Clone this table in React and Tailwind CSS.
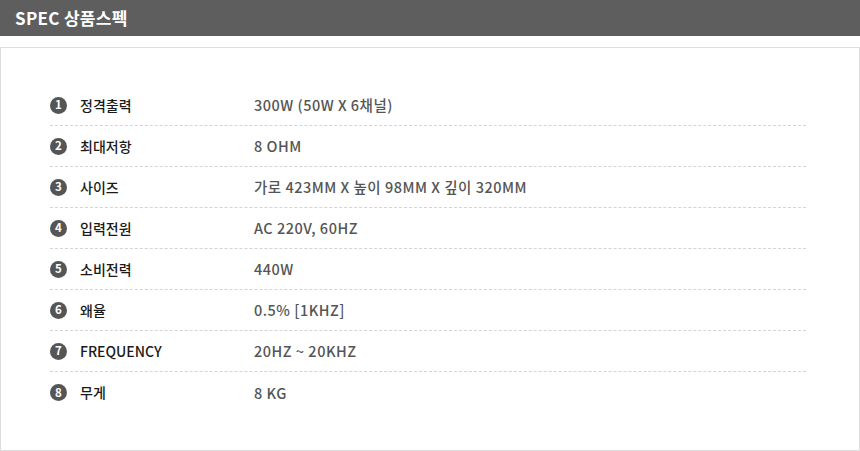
const specs = [
  ["정격출력", "300W (50W X 6채널)"],
  ["최대저항", "8 OHM"],
  ["사이즈", "가로 423MM X 높이 98MM X 깊이 320MM"],
  ["입력전원", "AC 220V, 60HZ"],
  ["소비전력", "440W"],
  ["왜율", "0.5% [1KHZ]"],
  ["FREQUENCY", "20HZ ~ 20KHZ"],
  ["무게", "8 KG"],
];

export default function App() {
  return (
    <div
      className="w-[860px] h-[451px] bg-white overflow-hidden"
      style={{ fontFamily: '"Noto Sans CJK KR", "Noto Sans", sans-serif' }}
    >
      <div className="h-[36px] bg-[#5e5e5e] flex items-center pl-[15px]">
        <span className="text-white text-[17px] font-bold tracking-[0.3px]">SPEC 상품스펙</span>
      </div>
      <div className="mt-[11px] h-[404px] border border-[#dddddd] pt-[37px] pl-[49px] pr-[53px]">
        {specs.map(([label, value], i) => (
          <div
            key={i}
            className={
              "h-[41px] flex items-center " +
              (i < specs.length - 1 ? "border-b border-dashed border-[#d4d4d4]" : "")
            }
          >
            <span className="w-[17px] h-[17px] rounded-full bg-[#555555] text-white text-[11.5px] font-bold flex items-center justify-center leading-none">
              {i + 1}
            </span>
            <span className="ml-[13px] w-[174px] text-[14px] font-medium text-[#1a1a1a]">{label}</span>
            <span className="text-[14.5px] font-medium tracking-[0.5px] text-[#555555]">{value}</span>
          </div>
        ))}
      </div>
    </div>
  );
}
